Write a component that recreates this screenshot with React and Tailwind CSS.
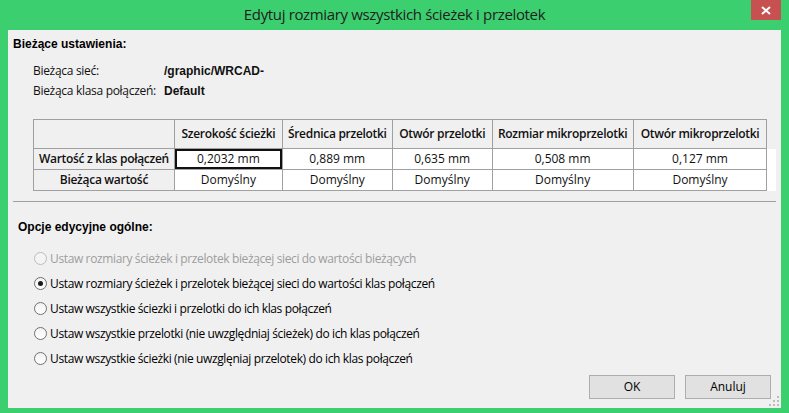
import React from "react";

const seg = "font-['Segoe_UI','Open_Sans','Noto_Sans',sans-serif]";
const ari = "font-['Liberation_Sans',Arial,sans-serif]";

function Radio({ checked, disabled, label }) {
  return (
    <div className="flex h-[25px] items-center">
      <div className="flex w-[23px] justify-end pr-[3px]">
        <span
          className={
            "flex h-[13px] w-[13px] items-center justify-center rounded-full border " +
            (disabled
              ? "border-[#bcbcbc] bg-[#f4f4f4]"
              : "border-[#707070] bg-gradient-to-b from-[#f2f2f2] to-[#ffffff]")
          }
        >
          {checked && <span className="h-[5px] w-[5px] rounded-full bg-[#1a1a1a]" />}
        </span>
      </div>
      <span
        className={
          seg +
          " text-[12px] leading-none tracking-[-0.37px] " +
          (disabled ? "text-[#9d9d9d]" : "text-[#000]")
        }
      >
        {label}
      </span>
    </div>
  );
}

const cols = [
  "Szerokość ścieżki",
  "Średnica przelotki",
  "Otwór przelotki",
  "Rozmiar mikroprzelotki",
  "Otwór mikroprzelotki",
];
const vals = ["0,2032 mm", "0,889 mm", "0,635 mm", "0,508 mm", "0,127 mm"];

export default function App() {
  return (
    <div className="flex h-[413px] w-[789px] flex-col bg-[#3ccf6f]">
      <div className="flex h-[30px] items-start">
        <div className="w-[38px]" />
        <div
          className={
            seg +
            " flex h-[30px] flex-1 items-center justify-center pb-[1px] text-[15px] tracking-[-0.35px] text-[#1e1e1e]"
          }
        >
          Edytuj rozmiary wszystkich ścieżek i przelotek
        </div>
        <div className="mr-[8px] flex h-[20px] w-[30px] items-center justify-center bg-[#c75050]">
          <svg width="10" height="9" viewBox="0 0 10 9">
            <path d="M1 1 L9 8 M9 1 L1 8" stroke="#fff" strokeWidth="2" />
          </svg>
        </div>
      </div>
      <div className="relative mx-[8px] flex h-[378px] w-[773px] flex-col bg-[#f0f0f0]">
        <div className={ari + " ml-[5px] mt-[7px] text-[12px] font-bold leading-[14px] text-black"}>
          Bieżące ustawienia:
        </div>
        <div className="ml-[25px] mt-[13px] flex flex-col gap-[6px]">
          <div className="flex h-[14px] items-center">
            <span className={seg + " w-[131px] text-[12px] tracking-[-0.3px] text-[#111]"}>Bieżąca sieć:</span>
            <span className={ari + " text-[12px] font-bold text-[#111]"}>/graphic/WRCAD-</span>
          </div>
          <div className="flex h-[14px] items-center">
            <span className={seg + " w-[131px] text-[12px] tracking-[-0.3px] text-[#111]"}>Bieżąca klasa połączeń:</span>
            <span className={ari + " text-[12px] font-bold text-[#111]"}>Default</span>
          </div>
        </div>
        <div className="ml-[25px] mt-[21px] w-[743px]">
          <table className={seg + " table-fixed border-collapse text-[12px] text-[#111]"}>
            <colgroup>
              <col className="w-[141px]" />
              <col className="w-[108px]" />
              <col className="w-[110px]" />
              <col className="w-[100px]" />
              <col className="w-[141px]" />
              <col className="w-[134px]" />
              <col className="w-[9px]" />
            </colgroup>
            <tbody>
              <tr className="h-[29px]">
                <td className="border border-[#a0a0a0] bg-[#f0f0f0]" />
                {cols.map((c) => (
                  <td
                    key={c}
                    className="border border-[#a0a0a0] bg-[#f0f0f0] text-center font-semibold tracking-[-0.3px] whitespace-nowrap"
                  >
                    {c}
                  </td>
                ))}
                <td />
              </tr>
              <tr className="h-[21px]">
                <td className="border border-[#a0a0a0] bg-[#f0f0f0] text-center font-semibold tracking-[-0.3px] whitespace-nowrap">
                  Wartość z klas połączeń
                </td>
                {vals.map((v, i) => (
                  <td
                    key={v}
                    className={
                      "border border-[#a0a0a0] bg-white text-center whitespace-nowrap " +
                      (i === 0 ? "shadow-[inset_0_0_0_2px_#111]" : "")
                    }
                  >
                    {v}
                  </td>
                ))}
                <td className="bg-white" />
              </tr>
              <tr className="h-[21px]">
                <td className="border border-[#a0a0a0] bg-[#f0f0f0] text-center font-semibold tracking-[-0.3px] whitespace-nowrap">
                  Bieżąca wartość
                </td>
                {vals.map((v) => (
                  <td key={v} className="border border-[#a0a0a0] bg-white text-center whitespace-nowrap">
                    Domyślny
                  </td>
                ))}
                <td className="bg-white" />
              </tr>
            </tbody>
          </table>
        </div>
        <div className="ml-[5px] mt-[10px] h-px w-[763px] bg-[#a0a0a0]" />
        <div className={ari + " ml-[10px] mt-[18px] text-[12px] font-bold leading-[14px] text-black"}>
          Opcje edycyjne ogólne:
        </div>
        <div className="ml-[19px] mt-[12px] flex flex-col">
          <Radio disabled label="Ustaw rozmiary ścieżek i przelotek bieżącej sieci do wartości bieżących" />
          <Radio checked label="Ustaw rozmiary ścieżek i przelotek bieżącej sieci do wartości klas połączeń" />
          <Radio label="Ustaw wszystkie ściezki i przelotki do ich klas połączeń" />
          <Radio label="Ustaw wszystkie przelotki (nie uwzględniaj ścieżek) do ich klas połączeń" />
          <Radio label="Ustaw wszystkie ścieżki (nie uwzglęniaj przelotek) do ich klas połączeń" />
        </div>
        <div className="mt-auto mb-[9px] mr-[10px] flex justify-end gap-[10px]">
          <button className={seg + " h-[24px] w-[86px] border border-[#adadad] bg-[#e1e1e1] text-[12px] text-black"}>
            OK
          </button>
          <button className={seg + " h-[24px] w-[86px] border border-[#adadad] bg-[#e1e1e1] text-[12px] text-black"}>
            Anuluj
          </button>
        </div>
        <svg className="absolute bottom-[2px] right-[2px]" width="10" height="10" viewBox="0 0 10 10">
          <g fill="#bdbdbd">
            <rect x="8" y="0" width="2" height="2" />
            <rect x="4" y="4" width="2" height="2" />
            <rect x="8" y="4" width="2" height="2" />
            <rect x="0" y="8" width="2" height="2" />
            <rect x="4" y="8" width="2" height="2" />
            <rect x="8" y="8" width="2" height="2" />
          </g>
        </svg>
      </div>
    </div>
  );
}
